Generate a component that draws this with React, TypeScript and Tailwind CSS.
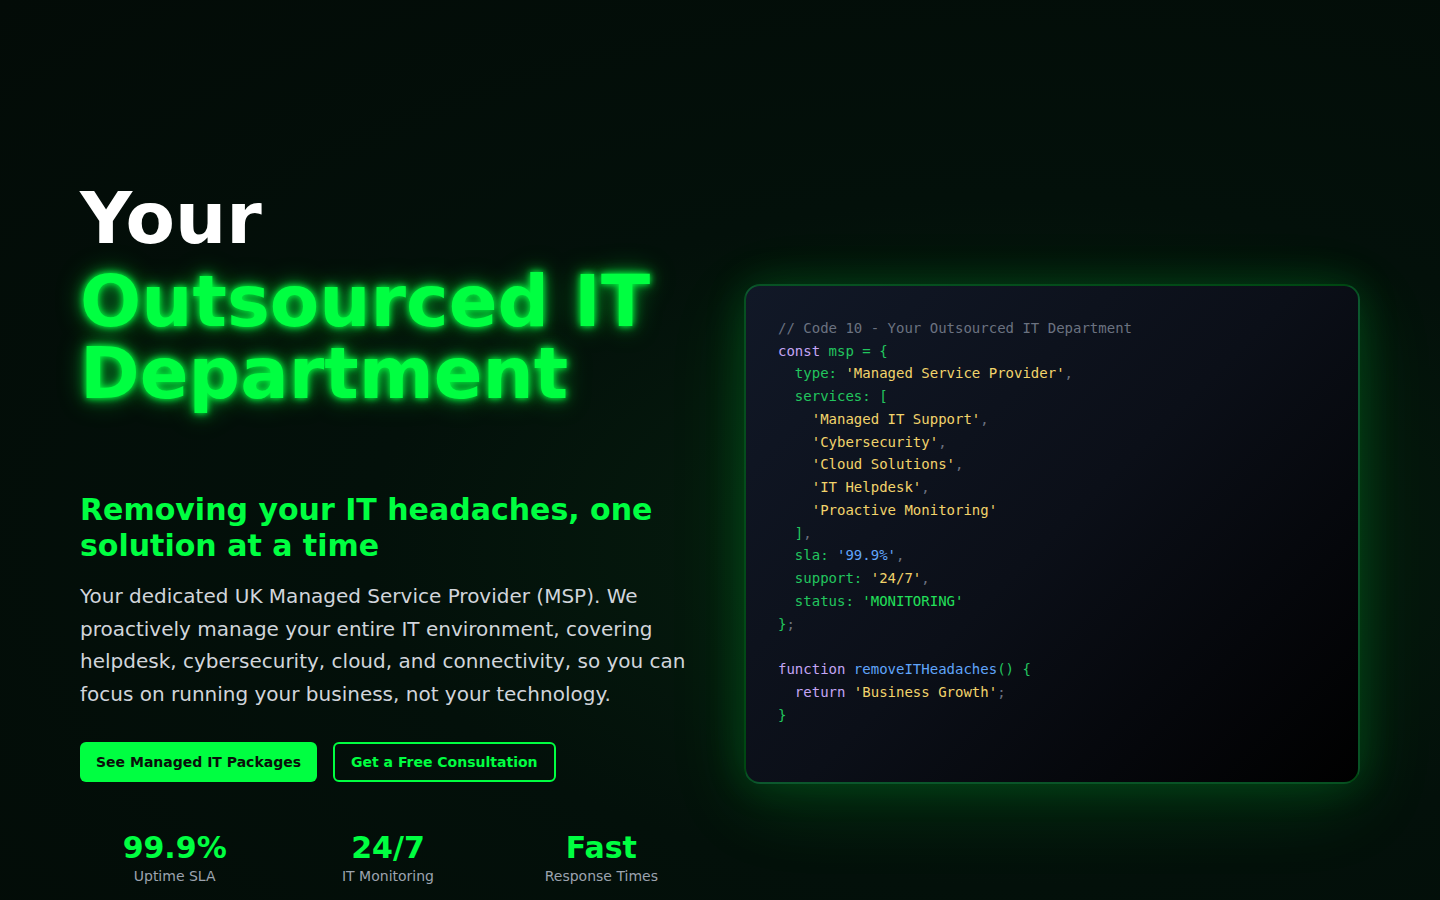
const green = "text-[#00ff41]";

type Tok = [string, string];

// one entry per line of the code card; each token is [class, text]
const codeLines: Tok[][] = [
  [["text-[#6b7280]", "// Code 10 - Your Outsourced IT Department"]],
  [
    ["text-[#c4a5f5]", "const "],
    ["text-[#22c55e]", "msp = {"],
  ],
  [
    ["text-[#22c55e]", "  type: "],
    ["text-[#f2d36b]", "'Managed Service Provider'"],
    ["text-[#6b7280]", ","],
  ],
  [["text-[#22c55e]", "  services: ["]],
  [
    ["text-[#f2d36b]", "    'Managed IT Support'"],
    ["text-[#6b7280]", ","],
  ],
  [
    ["text-[#f2d36b]", "    'Cybersecurity'"],
    ["text-[#6b7280]", ","],
  ],
  [
    ["text-[#f2d36b]", "    'Cloud Solutions'"],
    ["text-[#6b7280]", ","],
  ],
  [
    ["text-[#f2d36b]", "    'IT Helpdesk'"],
    ["text-[#6b7280]", ","],
  ],
  [["text-[#f2d36b]", "    'Proactive Monitoring'"]],
  [
    ["text-[#22c55e]", "  ]"],
    ["text-[#6b7280]", ","],
  ],
  [
    ["text-[#22c55e]", "  sla: "],
    ["text-[#60a5fa]", "'99.9%'"],
    ["text-[#6b7280]", ","],
  ],
  [
    ["text-[#22c55e]", "  support: "],
    ["text-[#f2d36b]", "'24/7'"],
    ["text-[#6b7280]", ","],
  ],
  [
    ["text-[#22c55e]", "  status: "],
    ["text-[#22e05a]", "'MONITORING'"],
  ],
  [
    ["text-[#22c55e]", "}"],
    ["text-[#6b7280]", ";"],
  ],
  [],
  [
    ["text-[#c4a5f5]", "function "],
    ["text-[#60a5fa]", "removeITHeadaches"],
    ["text-[#22c55e]", "() {"],
  ],
  [
    ["text-[#c4a5f5]", "  return "],
    ["text-[#f2d36b]", "'Business Growth'"],
    ["text-[#6b7280]", ";"],
  ],
  [["text-[#22c55e]", "}"]],
  [],
];

const stats = [
  { value: "99.9%", label: "Uptime SLA" },
  { value: "24/7", label: "IT Monitoring" },
  { value: "Fast", label: "Response Times" },
];

export default function App() {
  return (
    <section className="min-h-screen w-full bg-[radial-gradient(ellipse_at_70%_60%,#06200f_0%,#03100a_45%,#030b07_100%)] font-['DejaVu_Sans',sans-serif]">
      <div className="mx-auto max-w-[1280px] pt-[182px] pb-4 grid grid-cols-2 gap-12 items-center">
        {/* left: copy */}
        <div>
          <h1 className="text-7xl font-bold leading-none">
            <span className="block text-white">Your</span>
            <span
              className={`block mt-[11px] ${green} blur-[0.6px] [text-shadow:0_0_6px_#00ff41,0_0_14px_rgba(0,255,65,0.7),0_0_28px_rgba(0,255,65,0.4)]`}
            >
              Outsourced IT
              <br />
              Department
            </span>
          </h1>

          <h2 className={`mt-[83px] text-3xl font-bold leading-9 ${green}`}>
            Removing your IT headaches, one solution at a time
          </h2>

          <p className="mt-4 text-xl leading-relaxed text-[#d1d5db]">
            Your dedicated UK Managed Service Provider (MSP). We proactively
            manage your entire IT environment, covering helpdesk,
            cybersecurity, cloud, and connectivity, so you can focus on running
            your business, not your technology.
          </p>

          <div className="mt-8 flex gap-4">
            <button className="h-10 px-4 rounded-md bg-[#00ff41] text-[#0a0f0a] text-sm font-bold">
              See Managed IT Packages
            </button>
            <button
              className={`h-10 px-4 rounded-md border-2 border-[#00ff41] bg-transparent text-sm font-bold ${green}`}
            >
              Get a Free Consultation
            </button>
          </div>

          <div className="mt-12 grid grid-cols-3 gap-6 text-center">
            {stats.map((s) => (
              <div key={s.label}>
                <div className={`text-3xl font-bold leading-9 ${green}`}>
                  {s.value}
                </div>
                <div className="text-sm text-[#9ca3af]">{s.label}</div>
              </div>
            ))}
          </div>
        </div>

        {/* right: code card */}
        <div className="rounded-2xl border-2 border-[rgba(0,255,65,0.28)] bg-[linear-gradient(135deg,#111827_0%,#0b0f18_50%,#000000_100%)] px-8 pt-[31px] pb-[33px] shadow-[0_0_40px_rgba(0,255,65,0.16),0_20px_80px_rgba(0,255,65,0.12)]">
          <pre className="font-['DejaVu_Sans_Mono',monospace] text-sm leading-relaxed">
            {codeLines.map((line, i) => (
              <div key={i} className="h-[22.75px]">
                {line.map(([cls, text], j) => (
                  <span key={j} className={cls}>
                    {text}
                  </span>
                ))}
              </div>
            ))}
          </pre>
        </div>
      </div>
    </section>
  );
}
